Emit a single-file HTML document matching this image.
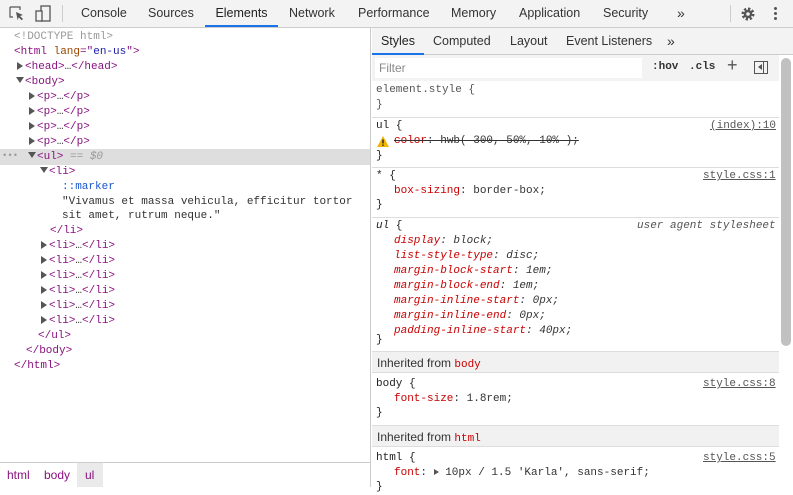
<!DOCTYPE html>
<html><head><style>
*{box-sizing:border-box;margin:0;padding:0}
body{width:793px;height:487px;overflow:hidden;background:#fff;font-family:"Liberation Sans",sans-serif;font-size:12px;color:#333;position:relative}
.mono{font-family:"Liberation Mono",monospace;font-size:11px}
.top{position:absolute;left:0;top:0;width:793px;height:28px;background:#f3f3f3;border-bottom:1px solid #ccc}
.tab{position:absolute;top:0;height:27px;line-height:27px;font-size:12.5px;color:#333}
.sel{border-bottom:2px solid #1a73e8}
.row{position:absolute;height:15px;line-height:15px;white-space:pre}
.t{color:#881280}.a{color:#994500}.v{color:#1a1aa6}.g{color:#999}
.tri{display:inline-block;width:0;height:0;border-top:4px solid transparent;border-bottom:4px solid transparent;border-left:6px solid #555;margin-right:2px;vertical-align:-1px}
.trd{display:inline-block;width:0;height:0;border-left:4px solid transparent;border-right:4px solid transparent;border-top:6px solid #555;margin-right:1px;vertical-align:1px}
.left{position:absolute;left:0;top:28px;width:371px;height:459px;border-right:1px solid #ccc}
.right{position:absolute;left:372px;top:28px;width:421px;height:459px}
.hr{position:absolute;left:372px;width:407px;height:1px;background:#ddd}
.p{color:#c80000}.k{color:#222}.u{text-decoration:underline;color:#555}
.ihead{position:absolute;left:372px;width:407px;height:22px;background:#f1f1f1;line-height:22px;padding-left:5px;font-size:12px;color:#333;border-top:1px solid #ddd;border-bottom:1px solid #ddd}
</style></head><body>
<div class="top">
<svg style="position:absolute;left:9px;top:6px" width="16" height="16" viewBox="0 0 16 16"><path d="M1 1h10v3M1 1v10h3" fill="none" stroke="#555" stroke-width="1.2"/><path d="M7 6l7 3-3 1 3 3-1.3 1.3-3-3-1 3z" fill="#555"/></svg>
<svg style="position:absolute;left:35px;top:5px" width="16" height="18" viewBox="0 0 16 18"><rect x="6" y="1" width="9" height="15" fill="none" stroke="#555" stroke-width="1.3"/><rect x="1" y="6" width="6" height="10" fill="#f3f3f3" stroke="#555" stroke-width="1.3"/></svg>
<div style="position:absolute;left:62px;top:5px;width:1px;height:17px;background:#ccc"></div>
<div class="tab" style="left:81px">Console</div>
<div class="tab" style="left:148px">Sources</div>
<div class="tab sel" style="left:205px;width:73px;text-align:center;color:#222">Elements</div>
<div class="tab" style="left:289px">Network</div>
<div class="tab" style="left:358px">Performance</div>
<div class="tab" style="left:451px">Memory</div>
<div class="tab" style="left:519px">Application</div>
<div class="tab" style="left:603px">Security</div>
<div class="tab" style="left:677px;font-size:14px">»</div>
<div style="position:absolute;left:730px;top:5px;width:1px;height:17px;background:#ccc"></div>
<svg style="position:absolute;left:740px;top:6px" width="16" height="16" viewBox="0 0 16 16"><circle cx="8" cy="8" r="5" fill="none" stroke="#555" stroke-width="3" stroke-dasharray="2.2 1.7"/><circle cx="8" cy="8" r="4.2" fill="#555"/><circle cx="8" cy="8" r="1.8" fill="#f3f3f3"/></svg>
<div style="position:absolute;left:774px;top:7px;width:3px;height:3px;background:#555;border-radius:2px;box-shadow:0 5px 0 #555,0 10px 0 #555"></div>
</div>

<div class="left mono">
<div class="row g" style="left:14px;top:2px">&lt;!DOCTYPE html&gt;</div>
<div class="row" style="left:14px;top:17px"><span class="t">&lt;html </span><span class="a">lang</span><span class="t">="</span><span class="v">en-us</span><span class="t">"&gt;</span></div>
<div class="row" style="left:17px;top:32px"><span class="tri"></span><span class="t">&lt;head&gt;</span>…<span class="t">&lt;/head&gt;</span></div>
<div class="row" style="left:16px;top:47px"><span class="trd"></span><span class="t">&lt;body&gt;</span></div>
<div class="row" style="left:29px;top:62px"><span class="tri"></span><span class="t">&lt;p&gt;</span>…<span class="t">&lt;/p&gt;</span></div>
<div class="row" style="left:29px;top:77px"><span class="tri"></span><span class="t">&lt;p&gt;</span>…<span class="t">&lt;/p&gt;</span></div>
<div class="row" style="left:29px;top:92px"><span class="tri"></span><span class="t">&lt;p&gt;</span>…<span class="t">&lt;/p&gt;</span></div>
<div class="row" style="left:29px;top:107px"><span class="tri"></span><span class="t">&lt;p&gt;</span>…<span class="t">&lt;/p&gt;</span></div>
<div style="position:absolute;left:0;top:121px;width:370px;height:16px;background:#dedede"></div>
<div class="row g" style="left:2px;top:121px;font-size:9px">•••</div>
<div class="row" style="left:28px;top:122px"><span class="trd"></span><span class="t">&lt;ul&gt;</span> <span class="g">== <i>$0</i></span></div>
<div class="row" style="left:40px;top:137px"><span class="trd"></span><span class="t">&lt;li&gt;</span></div>
<div class="row" style="left:62px;top:152px;color:#1a56d0">::marker</div>
<div class="row" style="left:62px;top:167px;color:#333">"Vivamus et massa vehicula, efficitur tortor</div>
<div class="row" style="left:62px;top:181px;color:#333">sit amet, rutrum neque."</div>
<div class="row t" style="left:50px;top:196px">&lt;/li&gt;</div>
<div class="row" style="left:41px;top:211px"><span class="tri"></span><span class="t">&lt;li&gt;</span>…<span class="t">&lt;/li&gt;</span></div>
<div class="row" style="left:41px;top:226px"><span class="tri"></span><span class="t">&lt;li&gt;</span>…<span class="t">&lt;/li&gt;</span></div>
<div class="row" style="left:41px;top:241px"><span class="tri"></span><span class="t">&lt;li&gt;</span>…<span class="t">&lt;/li&gt;</span></div>
<div class="row" style="left:41px;top:256px"><span class="tri"></span><span class="t">&lt;li&gt;</span>…<span class="t">&lt;/li&gt;</span></div>
<div class="row" style="left:41px;top:271px"><span class="tri"></span><span class="t">&lt;li&gt;</span>…<span class="t">&lt;/li&gt;</span></div>
<div class="row" style="left:41px;top:286px"><span class="tri"></span><span class="t">&lt;li&gt;</span>…<span class="t">&lt;/li&gt;</span></div>
<div class="row t" style="left:38px;top:301px">&lt;/ul&gt;</div>
<div class="row t" style="left:26px;top:316px">&lt;/body&gt;</div>
<div class="row t" style="left:14px;top:331px">&lt;/html&gt;</div>
<div style="position:absolute;left:0;top:434px;width:370px;height:25px;border-top:1px solid #ccc;font-family:'Liberation Sans',sans-serif;font-size:12px;line-height:24px">
<span class="t" style="position:absolute;left:7px">html</span><span class="t" style="position:absolute;left:44px">body</span><span class="t" style="position:absolute;left:77px;width:26px;padding-left:8px;background:#eaeaea">ul</span></div>
</div>

<div style="position:absolute;left:372px;top:28px;width:421px;height:27px;background:#f3f3f3;border-bottom:1px solid #ccc"></div>
<div class="tab" style="left:372px;top:28px;width:52px;text-align:center;color:#222;height:27px" ><span style="display:block;border-bottom:2px solid #1a73e8;height:27px">Styles</span></div>
<div class="tab" style="left:433px;top:28px">Computed</div>
<div class="tab" style="left:510px;top:28px">Layout</div>
<div class="tab" style="left:566px;top:28px">Event Listeners</div>
<div class="tab" style="left:667px;top:28px;font-size:14px">»</div>
<div style="position:absolute;left:372px;top:55px;width:407px;height:26px;background:#f3f3f3"></div>
<div style="position:absolute;left:375px;top:58px;width:267px;height:20px;background:#fff;color:#888;line-height:20px;padding-left:4px;font-size:12px">Filter</div>
<div class="mono" style="position:absolute;left:652px;top:61px;font-weight:bold;color:#333">:hov</div>
<div class="mono" style="position:absolute;left:689px;top:61px;font-weight:bold;color:#333">.cls</div>
<div style="position:absolute;left:727px;top:55px;font-size:18px;color:#555">+</div>
<div style="position:absolute;left:754px;top:61px;width:14px;height:13px;border:1px solid #555"><div style="position:absolute;left:3px;top:2px;border-top:3.5px solid transparent;border-bottom:3.5px solid transparent;border-right:4px solid #555"></div><div style="position:absolute;left:8px;top:0;width:1px;height:11px;background:#555"></div></div>
<div style="position:absolute;left:781px;top:58px;width:10px;height:288px;background:#c1c1c1;border-radius:5px"></div>

<div class="mono">
<div class="row" style="left:376px;top:83px;color:#555">element.style {</div>
<div class="row" style="left:376px;top:98px;color:#555">}</div>
<div class="hr" style="top:117px"></div>
<div class="row k" style="left:376px;top:119px">ul {</div>
<div class="row u" style="left:710px;top:119px">(index):10</div>
<svg style="position:absolute;left:377px;top:136px" width="12" height="11" viewBox="0 0 12 11"><path d="M6 0L12 11H0z" fill="#f2b500"/><rect x="5.3" y="3.5" width="1.4" height="4" fill="#222"/><rect x="5.3" y="8.5" width="1.4" height="1.4" fill="#222"/></svg>
<div class="row" style="left:394px;top:134px;text-decoration:line-through;color:#333"><span class="p">color</span>: hwb( 300, 50%, 10% );</div>
<div class="row k" style="left:376px;top:149px">}</div>
<div class="hr" style="top:167px"></div>
<div class="row k" style="left:376px;top:169px">* {</div>
<div class="row u" style="left:703px;top:169px">style.css:1</div>
<div class="row" style="left:394px;top:184px"><span class="p">box-sizing</span>: border-box;</div>
<div class="row k" style="left:376px;top:198px">}</div>
<div class="hr" style="top:217px"></div>
<div class="row k" style="left:376px;top:219px"><i>ul</i> {</div>
<div class="row" style="left:637px;top:219px;color:#555"><i>user agent stylesheet</i></div>
<div style="font-style:italic">
<div class="row" style="left:394px;top:234px"><span class="p">display</span>: block;</div>
<div class="row" style="left:394px;top:249px"><span class="p">list-style-type</span>: disc;</div>
<div class="row" style="left:394px;top:264px"><span class="p">margin-block-start</span>: 1em;</div>
<div class="row" style="left:394px;top:279px"><span class="p">margin-block-end</span>: 1em;</div>
<div class="row" style="left:394px;top:294px"><span class="p">margin-inline-start</span>: 0px;</div>
<div class="row" style="left:394px;top:309px"><span class="p">margin-inline-end</span>: 0px;</div>
<div class="row" style="left:394px;top:324px"><span class="p">padding-inline-start</span>: 40px;</div>
</div>
<div class="row k" style="left:376px;top:333px">}</div>
</div>
<div class="ihead" style="top:351px">Inherited from <span class="mono p">body</span></div>
<div class="mono">
<div class="row k" style="left:376px;top:377px">body {</div>
<div class="row u" style="left:703px;top:377px">style.css:8</div>
<div class="row" style="left:394px;top:392px"><span class="p">font-size</span>: 1.8rem;</div>
<div class="row k" style="left:376px;top:406px">}</div>
</div>
<div class="ihead" style="top:425px">Inherited from <span class="mono p">html</span></div>
<div class="mono">
<div class="row k" style="left:376px;top:451px">html {</div>
<div class="row u" style="left:703px;top:451px">style.css:5</div>
<div class="row" style="left:394px;top:466px"><span class="p">font</span>: <span style="display:inline-block;border-top:3.5px solid transparent;border-bottom:3.5px solid transparent;border-left:5px solid #555"></span> 10px / 1.5 'Karla', sans-serif;</div>
<div class="row k" style="left:376px;top:480px">}</div>
</div>
</body></html>
